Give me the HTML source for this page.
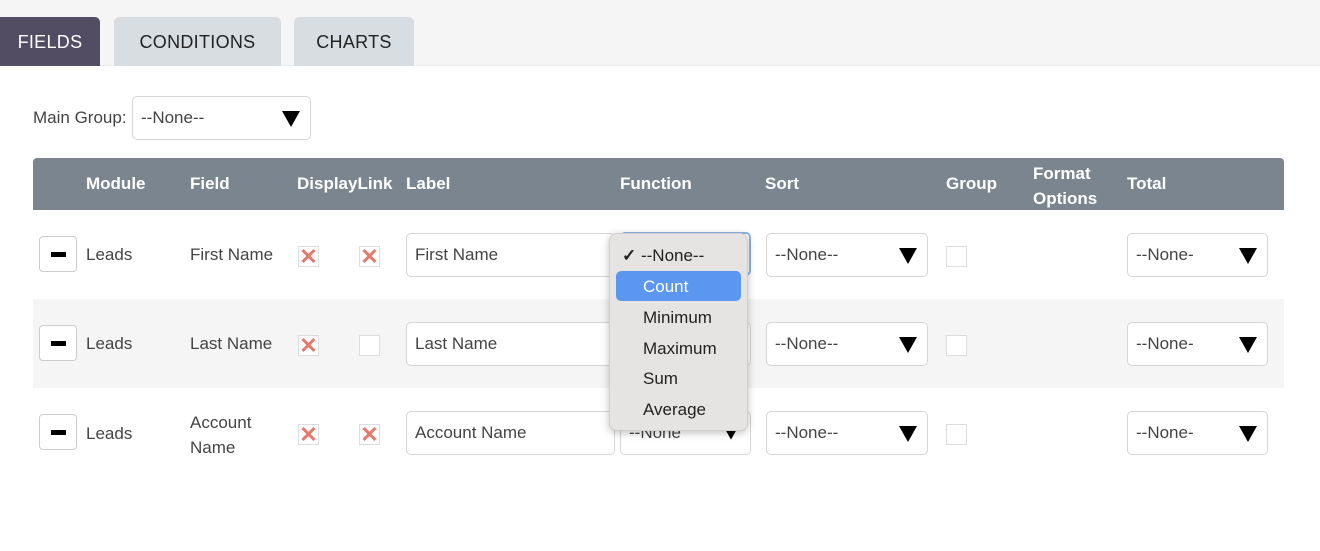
<!DOCTYPE html>
<html><head><style>
*{margin:0;padding:0;box-sizing:border-box}
body{width:1320px;height:551px;background:#fff;font-family:"Liberation Sans",sans-serif;color:#333;position:relative;overflow:hidden;font-size:17px}
.a{position:absolute}
.tab{position:absolute;top:17px;height:49px;border-radius:5px 5px 0 0;background:#d8dde1;color:#222;font-size:18px;line-height:50px;text-align:center;letter-spacing:.3px}
.sel{position:absolute;background:#fff;border:1px solid #d5d5d5;border-radius:5px;height:44px;line-height:42px;padding-left:8px;color:#444;font-size:17px;overflow:hidden}
.sel .tri{position:absolute;right:10px;top:14px;width:0;height:0;border-left:9px solid transparent;border-right:9px solid transparent;border-top:16px solid #000}
.hd{position:absolute;top:174px;color:#fff;font-weight:bold;font-size:17px}
.cb{position:absolute;width:21px;height:21px;border:1px solid #ddd;background:#fff}
.x{color:#e8786a;font-size:22px;line-height:19px;text-align:center;font-weight:bold}
.minus{position:absolute;left:39px;width:38px;height:36px;border:1px solid #ccc;border-radius:4px;background:#fff}
.minus:after{content:"";position:absolute;left:11px;top:15px;width:15px;height:5px;background:#000}
.t{position:absolute;font-size:17px;color:#444}
.dd{position:absolute;left:609px;top:233px;width:139px;height:198px;background:#e6e4e3;border-radius:8px;box-shadow:0 2px 8px rgba(0,0,0,.25);border:1px solid #d0cece}
.di{position:absolute;left:33px;font-size:17px;color:#222}
</style></head><body>
<div class="a" style="left:0;top:0;width:1320px;height:66px;background:#f5f5f5;border-bottom:1px solid #eaeaea"></div>
<div class="tab" style="left:0;width:100px;background:#534d64;color:#fff;border-radius:0 5px 0 0">FIELDS</div>
<div class="tab" style="left:114px;width:167px">CONDITIONS</div>
<div class="tab" style="left:294px;width:120px">CHARTS</div>

<div class="t" style="left:33px;top:108px">Main Group:</div>
<div class="sel" style="left:132px;top:96px;width:179px">--None--<span class="tri"></span></div>

<div class="a" style="left:33px;top:158px;width:1251px;height:52px;background:#7b8590;border-radius:4px 4px 0 0"></div>
<div class="hd" style="left:86px">Module</div>
<div class="hd" style="left:190px">Field</div>
<div class="hd" style="left:297px">DisplayLink</div>
<div class="hd" style="left:406px">Label</div>
<div class="hd" style="left:620px">Function</div>
<div class="hd" style="left:765px">Sort</div>
<div class="hd" style="left:946px">Group</div>
<div class="hd" style="left:1033px;top:161px;line-height:25px">Format<br>Options</div>
<div class="hd" style="left:1127px">Total</div>

<div class="a" style="left:33px;top:299px;width:1251px;height:89px;background:#f5f5f5"></div>

<!-- row1 -->
<div class="minus" style="top:236px"></div>
<div class="t" style="left:86px;top:245px">Leads</div>
<div class="t" style="left:190px;top:245px">First Name</div>
<div class="cb x" style="left:298px;top:246px">✕</div>
<div class="cb x" style="left:359px;top:246px">✕</div>
<div class="sel" style="left:406px;top:233px;width:209px">First Name</div>
<div class="sel" style="left:620px;top:232px;width:131px;border:2px solid #8fb3ea">--None--</div>
<div class="sel" style="left:766px;top:233px;width:162px">--None--<span class="tri"></span></div>
<div class="cb" style="left:946px;top:246px"></div>
<div class="sel" style="left:1127px;top:233px;width:141px">--None-<span class="tri"></span></div>

<!-- row2 -->
<div class="minus" style="top:325px"></div>
<div class="t" style="left:86px;top:334px">Leads</div>
<div class="t" style="left:190px;top:334px">Last Name</div>
<div class="cb x" style="left:298px;top:335px">✕</div>
<div class="cb" style="left:359px;top:335px"></div>
<div class="sel" style="left:406px;top:322px;width:209px">Last Name</div>
<div class="sel" style="left:620px;top:322px;width:131px">--None--</div>
<div class="sel" style="left:766px;top:322px;width:162px">--None--<span class="tri"></span></div>
<div class="cb" style="left:946px;top:335px"></div>
<div class="sel" style="left:1127px;top:322px;width:141px">--None-<span class="tri"></span></div>

<!-- row3 -->
<div class="minus" style="top:414px"></div>
<div class="t" style="left:86px;top:424px">Leads</div>
<div class="t" style="left:190px;top:410px;line-height:25px">Account<br>Name</div>
<div class="cb x" style="left:298px;top:424px">✕</div>
<div class="cb x" style="left:359px;top:424px">✕</div>
<div class="sel" style="left:406px;top:411px;width:209px">Account Name</div>
<div class="sel" style="left:620px;top:411px;width:131px">--None<span class="tri" style="transform:scale(.7)"></span></div>
<div class="sel" style="left:766px;top:411px;width:162px">--None--<span class="tri"></span></div>
<div class="cb" style="left:946px;top:424px"></div>
<div class="sel" style="left:1127px;top:411px;width:141px">--None-<span class="tri"></span></div>

<!-- dropdown -->
<div class="dd">
<div class="di" style="left:12px;top:12px"><b>✓</b> --None--</div>
<div class="a" style="left:6px;top:37px;width:125px;height:30px;background:#5b97f0;border-radius:5px"></div>
<div class="di" style="top:43px;color:#fff">Count</div>
<div class="di" style="top:74px">Minimum</div>
<div class="di" style="top:105px">Maximum</div>
<div class="di" style="top:135px">Sum</div>
<div class="di" style="top:166px">Average</div>
</div>
</body></html>
